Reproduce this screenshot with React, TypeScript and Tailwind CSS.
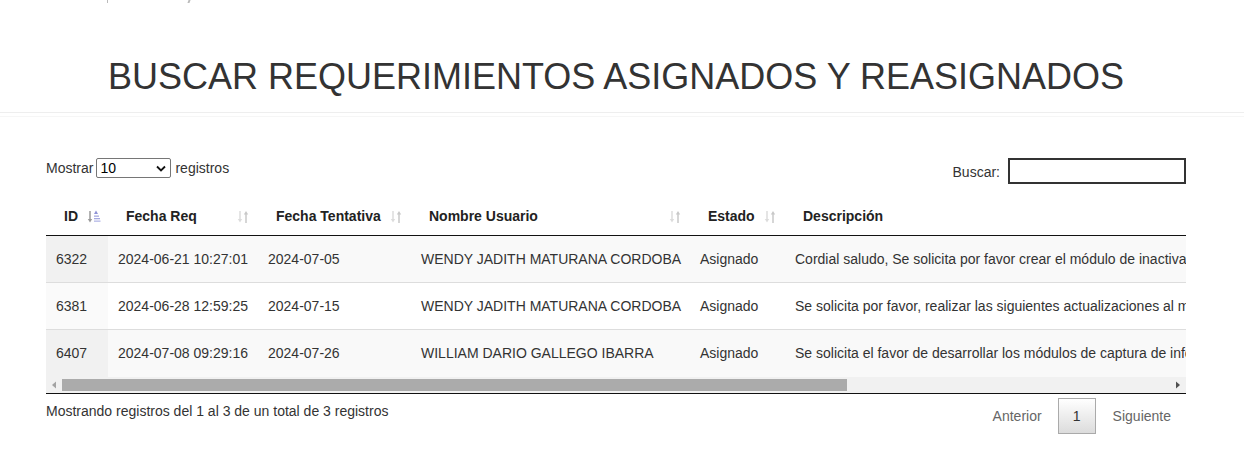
import React from "react";

const rows = [
  ["6322", "2024-06-21 10:27:01", "2024-07-05", "WENDY JADITH MATURANA CORDOBA", "Asignado", "Cordial saludo, Se solicita por favor crear el módulo de inactivación de usuarios en el sistema de información institucional"],
  ["6381", "2024-06-28 12:59:25", "2024-07-15", "WENDY JADITH MATURANA CORDOBA", "Asignado", "Se solicita por favor, realizar las siguientes actualizaciones al módulo de reportes del sistema de información"],
  ["6407", "2024-07-08 09:29:16", "2024-07-26", "WILLIAM DARIO GALLEGO IBARRA", "Asignado", "Se solicita el favor de desarrollar los módulos de captura de información para el seguimiento de los procesos"],
];

const widths = ["w-[62px]", "w-[150px]", "w-[153px]", "w-[279px]", "w-[95px]", "w-[700px]"];

function SortBoth() {
  return (
    <svg width="15" height="15" viewBox="0 0 15 15">
      <line x1="4" y1="2" x2="4" y2="11" stroke="#dcdcdc" strokeWidth="1.5" />
      <polygon points="1.8,10 6.2,10 4,13.5" fill="#dcdcdc" />
      <line x1="10" y1="5" x2="10" y2="14" stroke="#c8c8c8" strokeWidth="1.5" />
      <polygon points="7.8,5.5 12.2,5.5 10,2" fill="#c8c8c8" />
    </svg>
  );
}

function SortAsc() {
  return (
    <svg width="15" height="15" viewBox="0 0 15 15">
      <line x1="4" y1="2" x2="4" y2="11" stroke="#9a9a9a" strokeWidth="1.5" />
      <polygon points="1.8,10 6.2,10 4,13.5" fill="#9a9a9a" />
      <polygon points="8,5 12,5 10,1.5" fill="#8f93d6" />
      <rect x="8" y="6.5" width="5" height="1.3" fill="#a6a9e0" />
      <rect x="8" y="9" width="6" height="1.3" fill="#a6a9e0" />
      <rect x="8" y="11.5" width="6.5" height="1.3" fill="#b4b7e6" />
    </svg>
  );
}

const headers: [string, "asc" | "both" | null][] = [
  ["ID", "asc"],
  ["Fecha Req", "both"],
  ["Fecha Tentativa", "both"],
  ["Nombre Usuario", "both"],
  ["Estado", "both"],
  ["Descripción", null],
];

export default function App() {
  return (
    <div className="w-[1244px] h-[449px] bg-white overflow-hidden font-['Liberation_Sans',Arial,sans-serif] text-[#333]">
      <div className="flex h-[4px] overflow-hidden">
        <div className="ml-[107px] w-px h-[3px] bg-[#bbb]" />
        <div className="ml-[80px] w-[2px] h-[3px] bg-[#bbb] skew-x-[-20deg]" />
      </div>
      <div className="pt-[53px] pb-[15px] border-b border-[#eee]">
        <h1 className="w-[1232px] text-center text-[36px] leading-[40px] font-normal text-[#333]">
          BUSCAR REQUERIMIENTOS ASIGNADOS Y REASIGNADOS
        </h1>
      </div>
      <div className="mt-[3px] h-px bg-[#f6f6f6]" />

      <div className="w-[1232px]">
        <div className="w-[1140px] mx-auto">
          <div className="mt-[41px] flex justify-between items-start text-[14px]">
            <div className="flex items-center h-[20px]">
              <span>Mostrar</span>
              <div className="ml-[3px] w-[75px] h-[20px] border border-[#767676] rounded-[2px] flex items-center justify-between pl-[3px] pr-[4px] text-[14px] text-black">
                <span>10</span>
                <svg width="10" height="7" viewBox="0 0 10 7">
                  <path d="M1 1.5 L5 5.5 L9 1.5" fill="none" stroke="#111" strokeWidth="1.8" />
                </svg>
              </div>
              <span className="ml-[4px]">registros</span>
            </div>
            <div className="flex items-center h-[26px]">
              <span className="mt-[2px]">Buscar:</span>
              <div className="ml-[8px] w-[178px] h-[26px] border-2 border-[#333] bg-white" />
            </div>
          </div>

          <div className="mt-[13px] w-[1140px] overflow-hidden">
            <div className="flex h-[39px] border-b border-[#111] whitespace-nowrap text-[14px] font-bold text-[#222]">
              {headers.map(([label, s], i) => (
                <div key={i} className={`${widths[i]} shrink-0 flex items-center justify-between pl-[18px] pr-[7px]`}>
                  <span>{label}</span>
                  {s === "asc" ? <SortAsc /> : s === "both" ? <SortBoth /> : null}
                </div>
              ))}
            </div>
            {rows.map((r, ri) => {
              const odd = ri % 2 === 0;
              return (
                <div
                  key={ri}
                  className={`flex whitespace-nowrap text-[14px] ${ri === 2 ? "h-[48px]" : ri === 0 ? "h-[46px]" : "h-[47px]"} ${ri > 0 ? "border-t border-[#ddd]" : ""} ${odd ? "bg-[#f9f9f9]" : "bg-white"}`}
                >
                  {r.map((c, ci) => (
                    <div
                      key={ci}
                      className={`${widths[ci]} shrink-0 flex items-center px-[10px] ${ci === 0 ? (odd ? "bg-[#f1f1f1]" : "bg-[#fafafa]") : ""}`}
                    >
                      {c}
                    </div>
                  ))}
                </div>
              );
            })}
            <div className="flex items-center h-[16px] bg-[#f1f1f1] border-b border-[#111] box-content">
              <div className="w-[16px] flex justify-center">
                <svg width="6" height="8" viewBox="0 0 6 8">
                  <polygon points="5,0.5 5,7.5 1,4" fill="#a3a3a3" />
                </svg>
              </div>
              <div className="w-[785px] h-[12px] bg-[#ababab]" />
              <div className="flex-1" />
              <div className="w-[16px] flex justify-center">
                <svg width="6" height="8" viewBox="0 0 6 8">
                  <polygon points="1,0.5 1,7.5 5,4" fill="#505050" />
                </svg>
              </div>
            </div>
          </div>

          <div className="flex justify-between items-start text-[14px]">
            <div className="pt-[7px] leading-[20px]">Mostrando registros del 1 al 3 de un total de 3 registros</div>
            <div className="mt-[4px] flex items-center leading-[20px]">
              <div className="px-[15px] py-[7px] text-[#666]">Anterior</div>
              <div className="ml-[1px] w-[38px] h-[36px] flex items-center justify-center border border-[#aaa] bg-gradient-to-b from-white to-[#dcdcdc] text-[#333]">
                1
              </div>
              <div className="ml-[2px] px-[15px] py-[7px] text-[#666]">Siguiente</div>
            </div>
          </div>
        </div>
      </div>
    </div>
  );
}
